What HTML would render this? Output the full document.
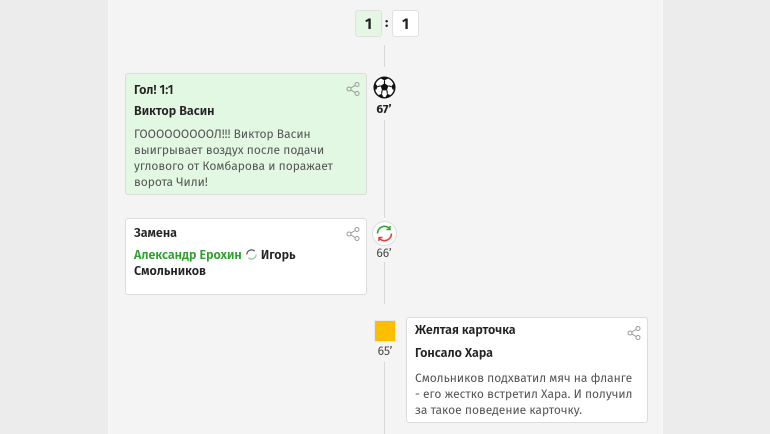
<!DOCTYPE html>
<html><head><meta charset="utf-8"><style>
*{margin:0;padding:0;box-sizing:border-box}
body{width:770px;height:434px;background:#ececec;font-family:"Fira Sans","Liberation Sans","DejaVu Sans",sans-serif;position:relative;overflow:hidden;color:#222}
.main{position:absolute;left:108px;top:0;width:555px;height:434px;background:#f4f4f4;border-left:2px solid #f7f7f7;border-right:2px solid #f7f7f7}
.abs{position:absolute}
.line{position:absolute;left:384px;width:1px;background:#d8d8d8}
.score{position:absolute;top:10px;width:27px;height:27px;border-radius:3px;font-weight:bold;font-size:15px;text-align:center;line-height:27px;border:1px solid #e0e0e0}
.card{position:absolute;width:242px;border:1px solid #dcdcdc;border-radius:3px;padding:9px 8px;font-size:12px}
.t{font-weight:600;font-size:12.5px;line-height:16px}
.n{font-weight:600;font-size:12.5px;line-height:16px;margin-top:5px}
.d{color:#555;font-size:12px;line-height:16px;margin-top:7px}
.sh{position:absolute;right:6px;top:8px}
.min{position:absolute;font-size:12px;font-weight:bold;width:30px;text-align:center}
</style></head><body>
<div class="main"></div>
<div class="score" style="left:355px;background:#e3f7e3">1</div>
<div class="abs" style="left:385px;top:14px;font-weight:bold;font-size:14px">:</div>
<div class="score" style="left:392px;background:#fff">1</div>
<div class="line" style="top:45px;height:22px"></div>
<div class="line" style="top:120px;height:98px"></div>
<div class="line" style="top:262px;height:42px"></div>
<div class="line" style="top:362px;height:72px"></div>

<div class="card" style="left:125px;top:73px;height:122px;background:#e3f8e3">
<div class="t">Гол! 1:1</div>
<div class="n">Виктор Васин</div>
<div class="d">ГОООООООООЛ!!! Виктор Васин выигрывает воздух после подачи углового от Комбарова и поражает ворота Чили!</div>
<svg class="sh" width="14" height="14" viewBox="0 0 14 14"><g fill="none" stroke="#999" stroke-width="1"><circle cx="11" cy="2.5" r="2"/><circle cx="3" cy="7" r="2"/><circle cx="11" cy="11.5" r="2"/><path d="M5 6 9 3.5M5 8 9 10.5"/></g></svg>
</div>
<svg class="abs" style="left:373px;top:76px" width="23" height="23" viewBox="0 0 24 24"><circle cx="12" cy="12" r="11.5" fill="#111"/><circle cx="12" cy="12" r="10" fill="#fff"/><polygon points="12,7.5 16,10.3 14.5,15 9.5,15 8,10.3" fill="#111"/><path d="M8 2.5 12 4.5 16 2.5 12 1z M21.5 8 19 11 21 15 22.5 12z M2.5 8 5 11 3 15 1.5 12z M6 20 9 18.5 11 22 7 21.5z M18 20 15 18.5 13 22 17 21.5z" fill="#111"/><path d="M12 4.5V8M16 10.3 19 11M8 10.3 5 11M9.5 15 9 18.5M14.5 15 15 18.5" stroke="#111" stroke-width="1.2"/></svg>
<div class="min" style="left:369px;top:103px">67’</div>

<div class="card" style="left:125px;top:218px;height:77px;background:#fff;padding-top:7px">
<div class="t">Замена</div>
<div class="n" style="margin-top:6px"><span style="color:#2ea02e">Александр Ерохин</span> <svg width="13" height="13" viewBox="0 0 14 14" style="vertical-align:-2px"><path d="M2 7a5 5 0 0 1 8.5-3.5" fill="none" stroke="#555" stroke-width="1.3"/><path d="M12 7a5 5 0 0 1-8.5 3.5" fill="none" stroke="#8c8" stroke-width="1.3"/></svg> Игорь Смольников</div>
<svg class="sh" width="14" height="14" viewBox="0 0 14 14"><g fill="none" stroke="#999" stroke-width="1"><circle cx="11" cy="2.5" r="2"/><circle cx="3" cy="7" r="2"/><circle cx="11" cy="11.5" r="2"/><path d="M5 6 9 3.5M5 8 9 10.5"/></g></svg>
</div>
<svg class="abs" style="left:372px;top:221px" width="25" height="25" viewBox="0 0 25 25"><circle cx="12.5" cy="12.5" r="12" fill="#fff" stroke="#ddd"/><path d="M5.5 12.5a7 7 0 0 1 12-5" fill="none" stroke="#2ea02e" stroke-width="1.6"/><path d="M18 5v3.5h-3.5" fill="none" stroke="#2ea02e" stroke-width="1.4"/><path d="M19.5 12.5a7 7 0 0 1-12 5" fill="none" stroke="#e33" stroke-width="1.6"/><path d="M7 20v-3.5h3.5" fill="none" stroke="#e33" stroke-width="1.4"/></svg>
<div class="min" style="left:369px;top:247px;font-weight:normal;color:#444">66’</div>

<div class="abs" style="left:374px;top:320px;width:22px;height:22px;background:#fbbf00;border:1px solid #e8e8e8"></div>
<div class="min" style="left:370px;top:345px;font-weight:normal;color:#444">65’</div>
<div class="card" style="left:406px;top:317px;height:106px;background:#fff;padding-top:5px">
<div class="t">Желтая карточка</div>
<div class="n" style="margin-top:7px">Гонсало Хара</div>
<div class="d" style="margin-top:9px">Смольников подхватил мяч на фланге - его жестко встретил Хара. И получил за такое поведение карточку.</div>
<svg class="sh" width="14" height="14" viewBox="0 0 14 14"><g fill="none" stroke="#999" stroke-width="1"><circle cx="11" cy="2.5" r="2"/><circle cx="3" cy="7" r="2"/><circle cx="11" cy="11.5" r="2"/><path d="M5 6 9 3.5M5 8 9 10.5"/></g></svg>
</div>
</body></html>
